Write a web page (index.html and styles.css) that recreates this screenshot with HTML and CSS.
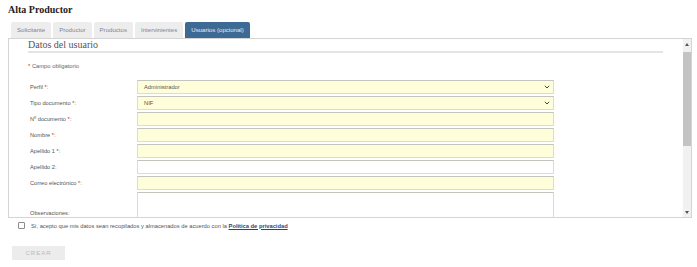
FILE: index.html
```html
<!DOCTYPE html>
<html lang="es">
<head>
    <meta charset="UTF-8">
    <title>Alta Productor</title>
    <link rel="stylesheet" href="styles.css">
</head>
<body>

<h1 class="page-title">Alta Productor</h1>

<!-- Tabs -->
<div class="tabs">
    <div class="tab">Solicitante</div>
    <div class="tab">Productor</div>
    <div class="tab">Productos</div>
    <div class="tab">Intervinientes</div>
    <div class="tab active">Usuarios (opcional)</div>
</div>

<!-- Panel with user data -->
<div class="panel">
    <div class="panel-body">
        <h2 class="section-title">Datos del usuario</h2>
        <p class="required-note"><span class="req">*</span> Campo obligatorio</p>

        <div class="form">
            <div class="row">
                <label>Perfil <span class="req">*</span>:</label>
                <div class="field required select">
                    <span>Administrador</span>
                    <svg width="6" height="4" viewBox="0 0 6 4"><path d="M0.8 0.8 L3 3 L5.2 0.8" fill="none" stroke="#444" stroke-width="1"/></svg>
                </div>
            </div>
            <div class="row">
                <label>Tipo documento <span class="req">*</span>:</label>
                <div class="field required select">
                    <span>NIF</span>
                    <svg width="6" height="4" viewBox="0 0 6 4"><path d="M0.8 0.8 L3 3 L5.2 0.8" fill="none" stroke="#444" stroke-width="1"/></svg>
                </div>
            </div>
            <div class="row">
                <label>Nº documento <span class="req">*</span>:</label>
                <div class="field required"></div>
            </div>
            <div class="row">
                <label>Nombre <span class="req">*</span>:</label>
                <div class="field required"></div>
            </div>
            <div class="row">
                <label>Apellido 1 <span class="req">*</span>:</label>
                <div class="field required"></div>
            </div>
            <div class="row">
                <label>Apellido 2:</label>
                <div class="field"></div>
            </div>
            <div class="row">
                <label>Correo electrónico <span class="req">*</span>:</label>
                <div class="field required"></div>
            </div>
            <div class="row tall">
                <label>Observaciones:</label>
                <div class="field textarea"></div>
            </div>
        </div>
    </div>

    <!-- Scrollbar -->
    <div class="scrollbar">
        <div class="scroll-btn">
            <svg width="4" height="3" viewBox="0 0 4 3"><path d="M0 3 L2 0 L4 3 Z" fill="#555"/></svg>
        </div>
        <div class="scroll-track">
            <div class="scroll-thumb"></div>
        </div>
        <div class="scroll-btn">
            <svg width="4" height="3" viewBox="0 0 4 3"><path d="M0 0 L2 3 L4 0 Z" fill="#555"/></svg>
        </div>
    </div>
</div>

<div class="consent">
    <span class="checkbox"></span>
    <span>Sí, acepto que mis datos sean recopilados y almacenados de acuerdo con la <a href="#">Política de privacidad</a></span>
</div>

<button class="btn-create">CREAR</button>

</body>
</html>
```

FILE: styles.css
```css
/* Page */
body {
    margin: 0;
    padding: 0 5px 0 8px;
    background: #ffffff;
    font-family: "Liberation Sans", Arial, sans-serif;
    color: #555;
}

.page-title {
    margin: 0;
    padding-top: 3px;
    font-family: "Liberation Serif", "Times New Roman", serif;
    font-size: 10px;
    line-height: 13px;
    font-weight: bold;
    color: #222;
}

/* Tabs */
.tabs {
    display: flex;
    gap: 2px;
    margin: 6px 0 0 3px;
    height: 16px;
}

.tab {
    padding: 0 6px;
    background-color: #ededed;
    color: #7d8590;
    font-size: 6.1px;
    line-height: 16px;
    border-radius: 2px 2px 0 0;
}

.tab.active {
    background-color: #3d6a95;
    color: #e4ecf4;
}

/* Panel */
.panel {
    display: flex;
    height: 180px;
    box-sizing: border-box;
    border: 1px solid #d4d4d4;
    overflow: hidden;
}

.panel-body {
    flex: 1;
    padding: 0 20px 0 19px;
    overflow: hidden;
}

.scrollbar {
    width: 8px;
    display: flex;
    flex-direction: column;
    background: #f1f1f1;
}

.scroll-btn {
    height: 10px;
    display: flex;
    align-items: center;
    justify-content: center;
}

.scroll-track {
    flex: 1;
    padding-top: 3px;
}

.scroll-thumb {
    height: 94px;
    background: #c3c3c3;
}

.section-title {
    margin: 0;
    font-family: "Liberation Serif", "Times New Roman", serif;
    font-size: 10px;
    line-height: 12px;
    font-weight: normal;
    color: #555;
    border-bottom: 2px solid #e4e4e4;
}

.required-note {
    margin: 9px 0 10px 0;
    font-size: 5.8px;
    line-height: 8px;
    color: #666;
}

.req {
    color: #d22;
}

/* Form rows */
.form {
    display: flex;
    flex-direction: column;
    gap: 2px;
    padding-left: 2px;
}

.row {
    display: flex;
    align-items: center;
    height: 14px;
}

.row label {
    width: 107px;
    flex-shrink: 0;
    font-size: 5.7px;
    color: #555;
}

.field {
    width: 417px;
    height: 14px;
    box-sizing: border-box;
    border: 1px solid #dcdcd0;
    border-top-color: #c4c4bc;
    background-color: #ffffff;
    font-size: 5.8px;
    color: #555;
    display: flex;
    align-items: center;
    padding: 0 6px;
}

.field.required {
    background-color: #fffedb;
}

.field.select {
    justify-content: space-between;
    padding-right: 3px;
}

.row.tall {
    height: 60px;
    align-items: flex-start;
}

.row.tall label {
    margin-top: 18px;
}

.field.textarea {
    height: 60px;
}

/* Consent */
.consent {
    display: flex;
    align-items: center;
    gap: 6px;
    margin: 3px 0 0 10px;
    height: 9px;
    font-size: 5.75px;
    color: #555;
}

.checkbox {
    width: 7px;
    height: 7px;
    box-sizing: border-box;
    border: 1px solid #8a8a8a;
    border-radius: 1px;
    background: #fff;
}

.consent a {
    color: #1d4a7a;
    font-weight: bold;
    text-decoration: underline;
}

.btn-create {
    display: block;
    margin: 16px 0 0 4px;
    width: 53px;
    height: 14px;
    border: none;
    background-color: #ececec;
    color: #b9b9b9;
    font-family: "Liberation Sans", Arial, sans-serif;
    font-size: 6px;
    letter-spacing: 1px;
    padding: 0;
}
```
